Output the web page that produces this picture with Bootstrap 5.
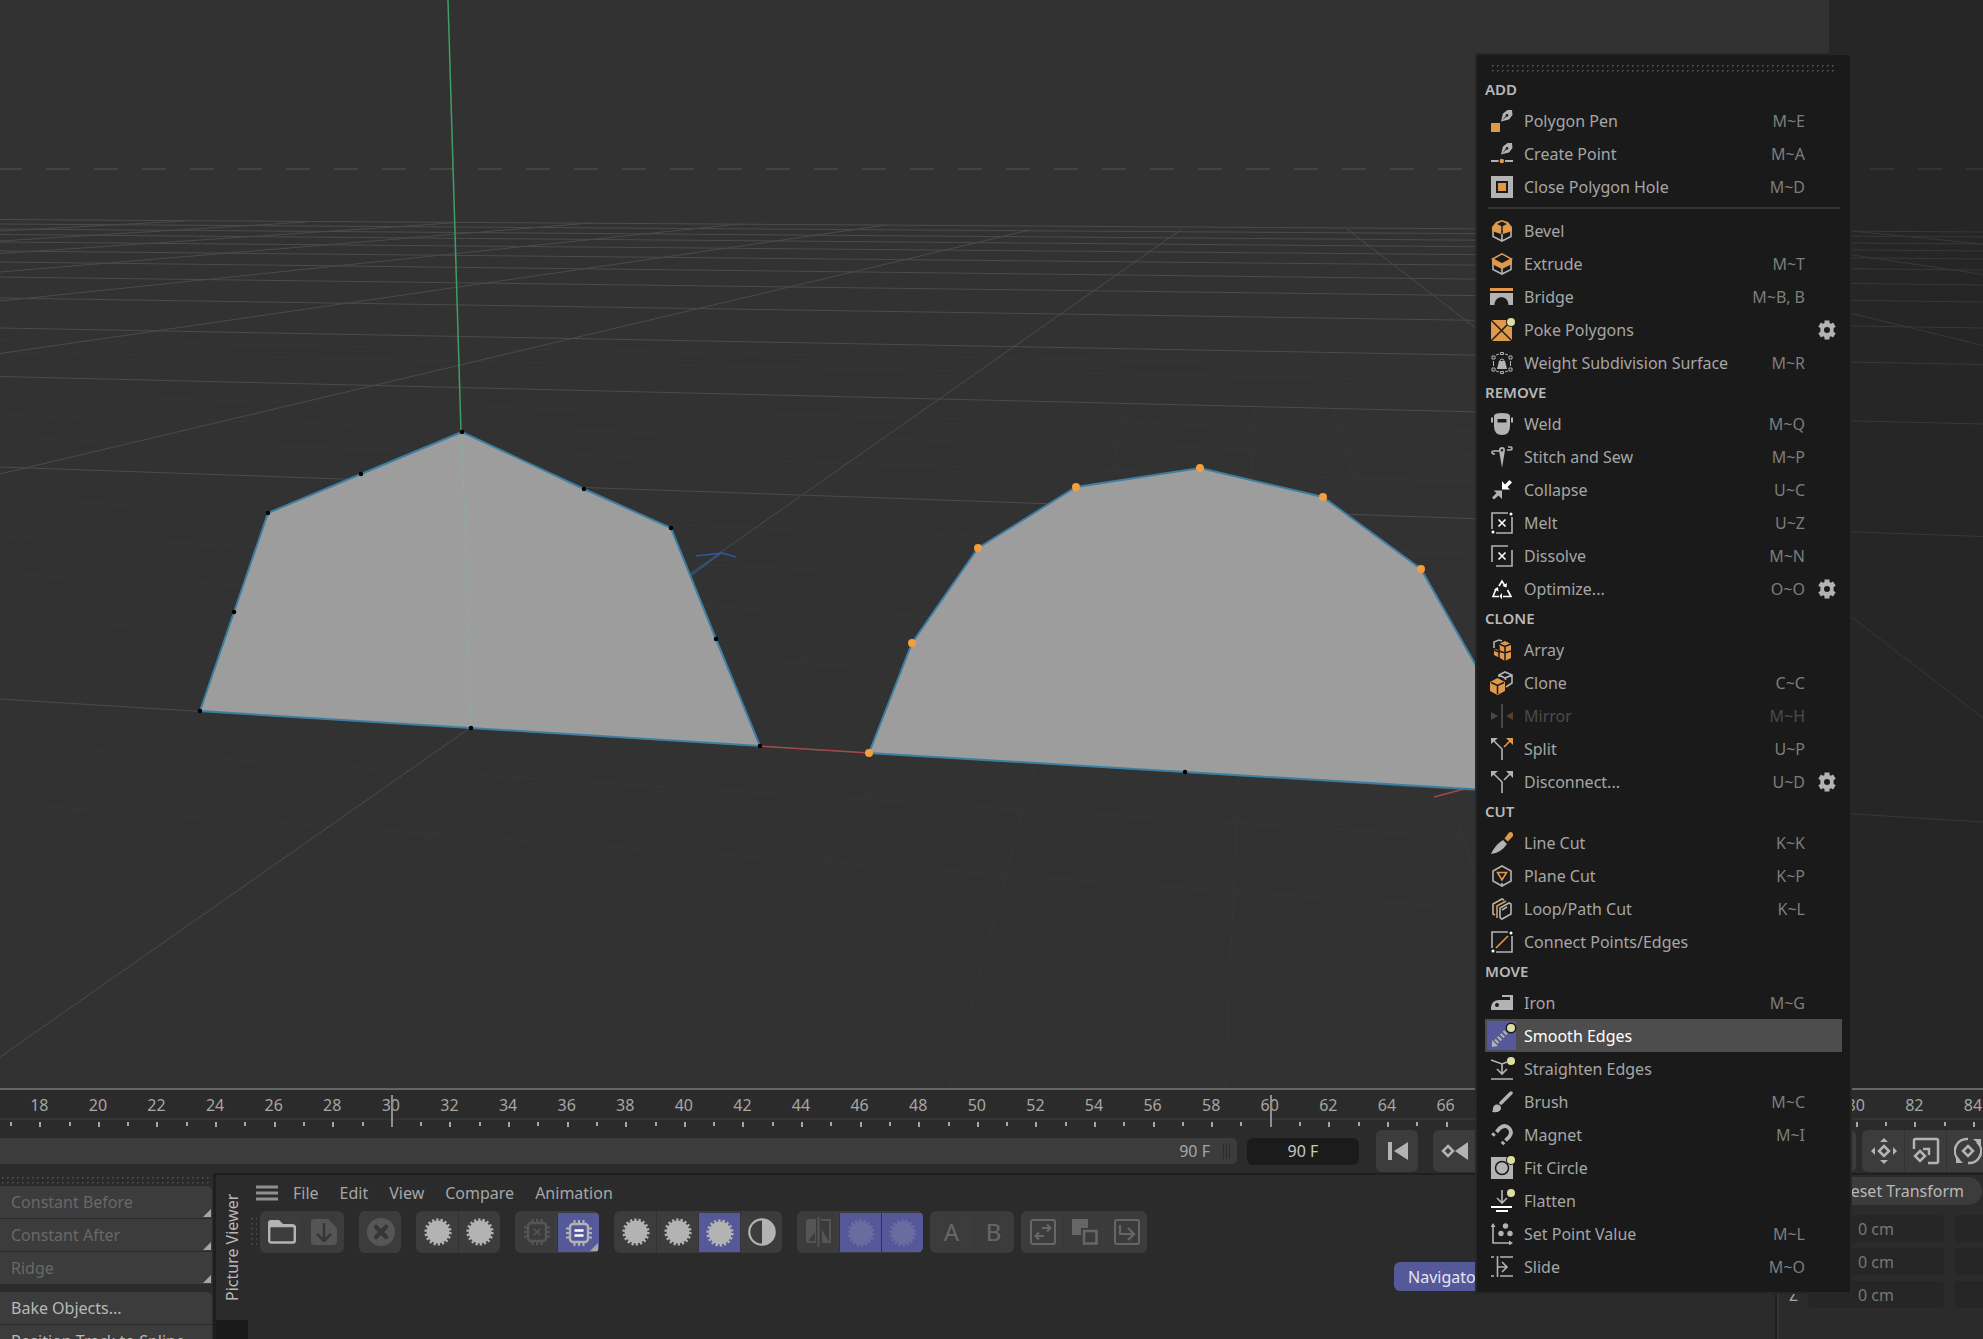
<!DOCTYPE html>
<html lang="en">
<head>
<meta charset="utf-8">
<meta name="viewport" content="width=device-width, initial-scale=1">
<title>Picture Viewer</title>
<link rel="stylesheet" href="https://cdn.jsdelivr.net/npm/bootstrap@5.3.0/dist/css/bootstrap.min.css">
<style>
:root{--ink:#a6a6a6;--panel:#2b2b2b;--btn:#3c3c3c;--deep:#1a1a1a;--accent:#55599a;--icon:#b3b3b3;--warm:#e0994a}
body{background:var(--panel);color:var(--ink);font:16px/24px "Noto Sans","Open Sans",sans-serif;overflow:hidden}
button{background:none;border:0;padding:0;color:inherit;text-align:left}
svg{display:block}
.g{fill:var(--icon)}.o{fill:var(--warm)}.y{fill:#dcdca4}.w{fill:#fff}
.gs,.os,.ws{fill:none;stroke-width:1.6;stroke:var(--icon)}.os{stroke:var(--warm)}.ws{stroke:#fff}
.ks{fill:none;stroke:var(--deep);stroke-width:1.5}.k{fill:var(--deep)}
.app{height:100vh}
.scene{background:#323232;min-height:0}
.scene svg{width:100%;height:100%}
.gridline{stroke:#4b4b4b;fill:none;stroke-width:1}
.fineline{stroke:#373737;fill:none;stroke-width:1}
.edge{stroke:#3c7fa3;stroke-width:2;fill:#9d9d9d}
/* timeline */
.timeline{border-top:2px solid #666;height:85px}
.ruler{height:40px;padding-left:11px;margin-right:-20px;background:linear-gradient(#343434,#343434) 0 28px/100% 2px no-repeat}
.frame{flex:1 1 0;position:relative;text-align:center;line-height:31px;padding-right:2px}
.frame::before,.frame::after{content:"";position:absolute;top:32px;width:2px;height:4px;background:#a6a6a6;left:-1px}
.frame::after{left:50%;height:5px;margin-left:-1px}
.frame.major::after{top:5px;height:32px;background:#8f8f8f}
.controls{margin-right:-5px;height:42px}
.range{background:var(--btn);height:26px;border-radius:0 5px 5px 0;padding-right:6px;line-height:26px}
.notches{width:8px;height:16px;margin-left:13px;background:repeating-linear-gradient(90deg,#2b2b2b 0 1px,transparent 1px 3px)}
.endframe{width:112px;height:27px;margin-left:10px;border:0;border-radius:6px;background:#1b1b1b;color:#c8c8c8;text-align:center}
.tools{background:var(--btn);border-radius:6px;height:42px;overflow:hidden}
.tool{width:42px;height:42px;display:flex;align-items:center;justify-content:center;position:relative;flex:none;border-left:1px solid #333}
.tool:first-child{border-left-color:transparent}
.tool.active{background:var(--accent);margin:2px 0;height:39px}
.tool:disabled{opacity:.22;color:#fff}
.tool.active:disabled{opacity:1}
.tool.active:disabled svg{opacity:.22}
.corner::after{content:"";position:absolute;right:1px;bottom:1px;border:4px solid;border-color:transparent #a6a6a6 #a6a6a6 transparent}
.jump{margin-left:17px}
.transport{width:423px;margin:0 6px 0 15px}
/* dock */
.dock{height:166px}
.grip{background-image:radial-gradient(circle,#484848 1px,transparent 1px);background-size:5px 5px}
.side{width:213px;padding:2px 1px 0 0}
.side .grip{height:10px;margin-bottom:1px}
.cmd{background:var(--btn);height:32px;width:100%;padding-left:11px;margin-bottom:1px;position:relative;color:#b8b8b8;flex:none}
.cmd:disabled{color:#686868}
.cmd.first{border-top-right-radius:5px}
.tabs{width:35px;border-left:3px solid #1f1f1f;border-top:2px solid #1f1f1f;background:var(--deep)}
.tab{writing-mode:vertical-rl;transform:rotate(180deg);height:145px;width:32px;background:var(--panel);text-align:center;line-height:32px;color:#b8b8b8}
.viewer{border-top:2px solid #1f1f1f;min-width:0}
.menubar{height:36px;padding-left:8px;gap:21px}
.burger{margin-right:-6px}
.toolbar{padding-left:1px;gap:15px}
.toolbar .grip{width:8px;height:32px;margin-right:-12px}
.near{margin-left:-8px}
.navtag{background:var(--accent);color:#e6e6ee;border-radius:6px;height:29px;width:140px;padding-left:14px;margin:9px 241px 0 auto}
.attrs{width:208px;border:solid #1f1f1f;border-width:2px 0 0 2px;box-shadow:inset 2px 0 #333;overflow:hidden}
.pill{background:var(--btn);border-radius:14px;height:28px;padding:0 18px;margin:2px 1px 10px;color:#b8b8b8}
.coord{padding-left:12px;margin-bottom:6px;height:27px}
.coord label{width:19px;flex:none}
.coord input{width:136px;height:27px;flex:none;margin-right:10px;background:#262626;border:0;border-radius:5px;color:#777;text-align:center}
/* popup menu */
.popup{position:absolute;z-index:5;top:53px;right:131px;width:377px;background:var(--deep);border:2px solid #272727;padding:8px 8px 9px}
.popup .grip{height:10px;margin:0 7px 3px 5px}
.section{font-weight:600;font-size:15px;line-height:26px;height:28px;color:#b8b8b8}
.entry{height:33px}
.entry.active{background:#4d4d4d;color:#fff}
.entry.active .glyph{background:var(--accent)}
.glyph{width:29px;height:29px;margin:0 8px 0 2px;display:flex;align-items:center;justify-content:center}
.entry kbd{background:none;color:#7d7d7d;font:inherit;padding:0}
.pick{padding-right:10px}
.pick:disabled,.pick:disabled kbd{color:#4a4a4a}.pick:disabled svg{opacity:.3}
.opts{width:27px;flex:none;padding-left:2px}
.rule{height:2px;background:#373737;margin:4px 2px 5px 3px}
</style>
</head>
<body>
<svg width="0" height="0" class="position-absolute" aria-hidden="true"><defs>
<symbol id="gear" viewBox="0 0 20 20"><path class="g" fill-rule="evenodd" d="M7.500 3V.500h5V3l1.400.8 2.200-1.300 2.600 4.300L16.600 8v4l2.100 1.200-2.600 4.300-2.200-1.300-1.400.8v2.500h-5V17l-1.400-.8-2.200 1.300-2.600-4.300L3.400 12V8L1.300 6.800l2.600-4.300 2.200 1.300zM10 7a3 3 0 1 0 0 6 3 3 0 0 0 0-6z"/></symbol>
<symbol id="burst" viewBox="0 0 28 28"><circle class="g" cx="14" cy="14" r="11.400"/><circle cx="14" cy="14" r="12" fill="none" stroke="#b3b3b3" stroke-width="3.200" stroke-dasharray="2.200 1.989"/></symbol>
<symbol id="nib" viewBox="0 0 22 22"><path class="g" fill-rule="evenodd" d="M10 11.500 12 3.500 16.500 0 21 0 21.500 5 18 9.500zM11 10.500 15.500 6.500A1.300 1.300 0 1 0 14.800 5.800z"/></symbol>
<symbol id="chip" viewBox="0 0 28 28"><path fill="none" stroke="#b3b3b3" stroke-width="2" d="M9.500 1v4M14 1v4M18.500 1v4M9.500 23v4M14 23v4M18.500 23v4M1 9.500h4M1 14h4M1 18.500h4M23 9.500h4M23 14h4M23 18.500h4"/><rect x="5" y="5" width="18" height="18" rx="3" fill="none" stroke="#b3b3b3" stroke-width="2.400"/></symbol>
<symbol id="box" viewBox="0 0 22 22"><path class="gs" d="M2 7v9.500l9 4.500 9-4.500V7M11 12v9"/></symbol>
</defs></svg>

<div class="app d-flex flex-column position-relative">
<main class="scene flex-grow-1">
<svg viewBox="0 0 1983 1088" preserveAspectRatio="xMinYMin slice" role="img" aria-label="Perspective view">
<path class="fineline" d="M0 340 1983 376M0 352 1983 391M0 395 1983 444M0 415 1983 469M0 438 1983 497M0 500 1983 573M0 536 1983 617M0 574 1983 665M0 618 1983 730M0 745 1983 870M0 803 1983 945M270 750 0 835M560 750 60 1088M880 590 330 1088M1010 570 680 1088M1130 400 950 1088M1255 400 1225 1088M1330 400 1540 1088M1852 950 1983 1080M1852 740 1983 865"/>
<path class="gridline" d="M0 219.500 1983 232M0 224 1983 237M0 229 1983 244M0 234.500 1983 251M0 242 1983 259M0 251 1983 270M0 262 1983 285M0 277 1983 302M0 298 1983 328M0 328 1983 364.500M0 376.500 1983 424M0 467 1983 536.500M0 699 1983 822M0 474 1030 230M0 353.500 886 225M0 301 740 224M0 272 590 223M0 253.500 459 222.500M0 241 306 222M0 231 185 221M0 1057 1182 229M1347 229 1983 718M1510 230 1983 345.500M1680 229 1983 274.500M1852 231 1983 244"/>
<path d="M-2 169H1983" stroke="#434343" stroke-width="2" stroke-dasharray="24 24"/>
<path d="M448 0 461 432" stroke="#3f9e64" stroke-width="1.500"/>
<path d="M690 576 721 553M696 556l26-3 14 4" fill="none" stroke="#3157a0" stroke-width="1.500"/>
<path d="M760 746 869 753M1434 797l30-8" stroke="#a04a4a" stroke-width="1.500"/>
<path class="edge" d="M462 432 361 474 268 513 234 612 200 711 471 728 760 746 716 639 671 528 584 489z"/>
<path d="M462 434 471 728" stroke="#86b596" stroke-dasharray="3 2"/>
<path class="edge" d="M869 753 912 643 978 548 1076 487 1200 468 1323 497 1421 569 1490 690 1520 792 1185 772z"/>
<path d="M462 432h0M361 474h0M268 513h0M234 612h0M200 711h0M471 728h0M760 746h0M716 639h0M671 528h0M584 489h0M1185 772h0" stroke="#000" stroke-width="4.500" stroke-linecap="round"/>
<path d="M869 753h0M912 643h0M978 548h0M1076 487h0M1200 468h0M1323 497h0M1421 569h0" stroke="#f49e3c" stroke-width="8" stroke-linecap="round"/>
<rect x="1829" width="154" height="1088" fill="#000" opacity=".24"/>
</svg>
</main>

<section class="timeline flex-shrink-0 overflow-hidden">
<div class="ruler d-flex">
<span class="frame">18</span><span class="frame">20</span><span class="frame">22</span><span class="frame">24</span><span class="frame">26</span><span class="frame">28</span><span class="frame major">30</span><span class="frame">32</span><span class="frame">34</span><span class="frame">36</span><span class="frame">38</span><span class="frame">40</span><span class="frame">42</span><span class="frame">44</span><span class="frame">46</span><span class="frame">48</span><span class="frame">50</span><span class="frame">52</span><span class="frame">54</span><span class="frame">56</span><span class="frame">58</span><span class="frame major">60</span><span class="frame">62</span><span class="frame">64</span><span class="frame">66</span><span class="frame">68</span><span class="frame">70</span><span class="frame">72</span><span class="frame">74</span><span class="frame">76</span><span class="frame">78</span><span class="frame">80</span><span class="frame">82</span><span class="frame">84</span>
</div>
<div class="controls d-flex align-items-center">
<div class="range flex-grow-1 d-flex justify-content-end align-items-center">90 F<span class="notches"></span></div>
<input class="endframe" value="90 F" aria-label="End frame">
<div class="tools jump"><button class="tool" aria-label="Go to start"><svg width="20" height="18"><path class="g" d="M0 0h4v18H0zM6 9 20 0v18z"/></svg></button></div>
<div class="tools transport d-flex"><button class="tool" aria-label="Previous key"><svg width="28" height="18"><path class="g" d="M14 9 27 0v18z"/><path d="M7 4l5 5-5 5-5-5z" fill="none" stroke="#b3b3b3" stroke-width="2.500"/></svg></button></div>
<div class="tools d-flex">
<button class="tool" aria-label="Record position"><svg width="28" height="28"><path class="g" d="M14 1l4 4h-8zM14 27l4-4h-8zM1 14l4-4v8zM27 14l-4-4v8z"/><path d="M14 9l5 5-5 5-5-5z" fill="none" stroke="#b3b3b3" stroke-width="2.500"/></svg></button>
<button class="tool" aria-label="Record scale"><svg width="28" height="28"><path d="M2 12V3.500Q2 2 3.500 2h21Q26 2 26 3.500v21q0 1.500-1.500 1.500H16M8 14l5 5-5 5-5-5zM11 12h6v6" fill="none" stroke="#b3b3b3" stroke-width="2.500"/></svg></button>
<button class="tool" aria-label="Record rotation"><svg width="28" height="28"><path d="M14 2A12 12 0 0 0 5 23M14 26A12 12 0 0 0 23 5M14 9l5 5-5 5-5-5z" fill="none" stroke="#b3b3b3" stroke-width="2.500"/><path class="g" d="M19 2h8v7zM2 19l7 7H2z"/></svg></button>
</div>
</div>
</section>

<section class="dock d-flex flex-shrink-0 overflow-hidden">
<aside class="side d-flex flex-column flex-shrink-0">
<div class="grip flex-shrink-0"></div>
<button class="cmd first corner" disabled>Constant Before</button>
<button class="cmd corner" disabled>Constant After</button>
<button class="cmd corner mb-2" disabled>Ridge</button>
<button class="cmd first">Bake Objects...</button>
<button class="cmd">Position Track to Spline...</button>
</aside>
<div class="tabs flex-shrink-0"><button class="tab">Picture Viewer</button></div>
<section class="viewer flex-grow-1">
<nav class="menubar d-flex align-items-center">
<button class="burger" aria-label="Menu"><svg width="22" height="16"><path d="M0 2h22M0 8h22M0 14h22" stroke="#909090" stroke-width="3"/></svg></button>
<button>File</button><button>Edit</button><button>View</button><button>Compare</button><button>Animation</button>
</nav>
<div class="toolbar d-flex align-items-center">
<div class="grip"></div>
<div class="tools d-flex">
<button class="tool" aria-label="Open"><svg width="28" height="24"><path class="g" d="M0 3Q0 0 3 0h8l4 4h9q4 0 4 4H0z"/><rect x="1.200" y="6" width="25.600" height="16.500" rx="2" fill="#3c3c3c" stroke="#b3b3b3" stroke-width="2.400"/></svg></button>
<button class="tool" disabled aria-label="Save"><svg width="26" height="26"><path class="g" d="M4 0h13l9 9v13q0 4-4 4H4q-4 0-4-4V4q0-4 4-4z"/><path d="M13 4v17M6 15l7 7 7-7" fill="none" stroke="#222" stroke-width="2.500"/></svg></button>
</div>
<div class="tools"><button class="tool" disabled aria-label="Stop"><svg width="28" height="28"><circle class="g" cx="14" cy="14" r="14"/><path d="M9 9l10 10M19 9 9 19" stroke="#222" stroke-width="4.500" stroke-linecap="round"/></svg></button></div>
<div class="tools d-flex"><button class="tool" aria-label="Image"><svg width="28" height="28"><use href="#burst"/></svg></button><button class="tool" aria-label="Layer"><svg width="28" height="28"><use href="#burst"/></svg></button></div>
<div class="tools d-flex">
<button class="tool" disabled aria-label="Clear cache"><svg width="28" height="28"><use href="#chip"/><path class="gs" stroke-width="2.500" d="M10.500 10.500l7 7M17.500 10.500l-7 7"/></svg></button>
<button class="tool active corner" aria-label="Cache"><svg width="28" height="28"><use href="#chip"/><path stroke="#fff" stroke-width="2.400" d="M9.500 11.500h9M9.500 16.500h9"/></svg></button>
</div>
<div class="tools d-flex">
<button class="tool" aria-label="Red"><svg width="28" height="28"><use href="#burst"/></svg></button><button class="tool" aria-label="Green"><svg width="28" height="28"><use href="#burst"/></svg></button><button class="tool active" aria-label="Blue"><svg width="28" height="28"><use href="#burst"/></svg></button>
<button class="tool" aria-label="Contrast"><svg width="28" height="28"><circle cx="14" cy="14" r="12.700" fill="none" stroke="#b3b3b3" stroke-width="2.200"/><path class="g" d="M14 1v26a13 13 0 0 0 0-26z"/></svg></button>
</div>
<div class="tools d-flex">
<button class="tool" disabled aria-label="Compare images"><svg width="26" height="30"><path class="g" fill-rule="evenodd" d="M3 2h7v24H2Q0 26 0 24V5Q0 2 3 2zM9 15l-7 9h7zM16 13l8 13h-8z"/><path d="M12.500 0v30M15 3h9v23" fill="none" stroke="#b3b3b3" stroke-width="2"/></svg></button>
<button class="tool active" disabled aria-label="Image A"><svg width="28" height="28"><use href="#burst"/></svg></button><button class="tool active" disabled aria-label="Image B"><svg width="28" height="28"><use href="#burst"/></svg></button>
</div>
<div class="tools near d-flex fs-4"><button class="tool" disabled>A</button><button class="tool" disabled>B</button></div>
<div class="tools near d-flex">
<button class="tool" disabled aria-label="Swap"><svg width="26" height="26"><rect x="1" y="1" width="24" height="24" rx="2" fill="none" stroke="#fff" stroke-width="2"/><path fill="none" stroke="#fff" stroke-width="2" d="M12 9h8M17 5.500 20.500 9 17 12.500M14 17H6M9 13.500 5.500 17 9 20.500"/></svg></button>
<button class="tool" disabled aria-label="Difference"><svg width="26" height="26"><path fill="#fff" d="M0 0h16v9H9v7H0z"/><path fill="none" stroke="#fff" stroke-width="2.500" d="M12 12h12.500v12.500H12z"/></svg></button>
<button class="tool" disabled aria-label="Export"><svg width="26" height="26"><rect x="1" y="1" width="24" height="24" rx="2" fill="none" stroke="#fff" stroke-width="2"/><path fill="none" stroke="#fff" stroke-width="2.200" d="M6 6v9h13M14 9l6 6-6 6"/></svg></button>
</div>
</div>
<button class="navtag d-block">Navigator</button>
</section>
<aside class="attrs flex-shrink-0">
<div class="d-flex justify-content-end"><button class="pill">Reset Transform</button></div>
<div class="coord d-flex align-items-center"><label for="cx">X</label><input id="cx" value="0 cm"><input value="0 cm" aria-label="X rotation"></div>
<div class="coord d-flex align-items-center"><label for="cy">Y</label><input id="cy" value="0 cm"><input value="0 cm" aria-label="Y rotation"></div>
<div class="coord d-flex align-items-center"><label for="cz">Z</label><input id="cz" value="0 cm"><input value="0 cm" aria-label="Z rotation"></div>
</aside>
</section>

<div class="popup" role="menu">
<div class="grip"></div>
<div class="section">ADD</div>
<div class="entry d-flex align-items-center"><button class="pick flex-grow-1 d-flex align-items-center"><span class="glyph"><svg width="22" height="22"><use href="#nib"/><path class="o" d="M0 13h9v9H0z"/></svg></span>Polygon Pen<kbd class="ms-auto">M~E</kbd></button><span class="opts"></span></div>
<div class="entry d-flex align-items-center"><button class="pick flex-grow-1 d-flex align-items-center"><span class="glyph"><svg width="22" height="22"><use href="#nib"/><path class="g" d="M0 17h7.500v2H0zM14 17h8v2h-8z"/><circle class="o" cx="10.800" cy="18" r="2.200"/></svg></span>Create Point<kbd class="ms-auto">M~A</kbd></button><span class="opts"></span></div>
<div class="entry d-flex align-items-center"><button class="pick flex-grow-1 d-flex align-items-center"><span class="glyph"><svg width="22" height="22"><path class="g" d="M0 0h22v22H0z"/><path class="k" d="M5 5h12v12H5z"/><path class="o" d="M7 7h8v8H7z"/></svg></span>Close Polygon Hole<kbd class="ms-auto">M~D</kbd></button><span class="opts"></span></div>
<div class="rule"></div>
<div class="entry d-flex align-items-center"><button class="pick flex-grow-1 d-flex align-items-center"><span class="glyph"><svg width="22" height="22"><use href="#box"/><path class="o" d="M1 7 5 2l6-2 6 2 4 5v4l-9 3v-2l-1-1-1 1v2l-9-3z"/><path class="k" d="M6 4l5-2.500L16 4l-5 2.500zM10.300 6h1.400v8h-1.400z"/></svg></span>Bevel</button><span class="opts"></span></div>
<div class="entry d-flex align-items-center"><button class="pick flex-grow-1 d-flex align-items-center"><span class="glyph"><svg width="22" height="22"><use href="#box"/><path class="o" d="M1 6l10 5 10-5v5l-10 5-10-5z"/><path class="os" d="M1.500 6 11 .900 20.500 6 11 11z"/></svg></span>Extrude<kbd class="ms-auto">M~T</kbd></button><span class="opts"></span></div>
<div class="entry d-flex align-items-center"><button class="pick flex-grow-1 d-flex align-items-center"><span class="glyph"><svg width="23" height="18"><path class="o" d="M0 0h23v3H0z"/><path class="g" d="M0 5h23v12h-4.500C18.500 6.500 4.500 6.500 4.500 17H0z"/></svg></span>Bridge<kbd class="ms-auto">M~B, B</kbd></button><span class="opts"></span></div>
<div class="entry d-flex align-items-center"><button class="pick flex-grow-1 d-flex align-items-center"><span class="glyph"><svg width="22" height="22" overflow="visible"><path class="o" d="M0 1h21v21H0z"/><path class="ks" d="M0 1l21 21M0 22 21 1"/><circle class="k" cx="20" cy="3" r="5"/><circle class="y" cx="20" cy="3" r="4"/></svg></span>Poke Polygons</button><button class="opts" aria-label="Poke options"><svg width="20" height="20"><use href="#gear"/></svg></button></div>
<div class="entry d-flex align-items-center"><button class="pick flex-grow-1 d-flex align-items-center"><span class="glyph"><svg width="22" height="22"><path fill="none" stroke="#b3b3b3" d="M1 4h3v3H1zM9.500 .500h3v2h-3zM18 4h3v3h-3zM1 16h3v3H1zM18 16h3v3h-3zM9.500 19.500h3v2h-3zM2.500 9v5M19.500 9v5M5 3l3-1M14 2l3 1M5 19l3 1M14 20l3-1M9 9a2 2 0 1 1 4 0"/><path class="g" d="M8 9h6l2 8H6z"/></svg></span>Weight Subdivision Surface<kbd class="ms-auto">M~R</kbd></button><span class="opts"></span></div>
<div class="section">REMOVE</div>
<div class="entry d-flex align-items-center"><button class="pick flex-grow-1 d-flex align-items-center"><span class="glyph"><svg width="22" height="22"><path class="g" d="M3 3Q3 0 11 0t8 3v10q0 9-8 9t-8-9zM0 4.500h2v5H0zM20 4.500h2v5h-2z"/><path class="k" d="M6.500 6h9v3.500h-9z"/></svg></span>Weld<kbd class="ms-auto">M~Q</kbd></button><span class="opts"></span></div>
<div class="entry d-flex align-items-center"><button class="pick flex-grow-1 d-flex align-items-center"><span class="glyph"><svg width="22" height="22"><path class="g" fill-rule="evenodd" d="M8 4q0-3 3-3t3 3l-3 18zM11 3a1.300 1.300 0 1 0 0 2.600A1.300 1.300 0 0 0 11 3z"/><path class="gs" d="M4 8Q1 8 1 6.500T3 5h6M16 4h3q2 0 2-1.700T18.500 1H17"/></svg></span>Stitch and Sew<kbd class="ms-auto">M~P</kbd></button><span class="opts"></span></div>
<div class="entry d-flex align-items-center"><button class="pick flex-grow-1 d-flex align-items-center"><span class="glyph"><svg width="22" height="22"><path class="w" d="M11 2v8.500h8L16.500 8l4.500-4.500L18.500 1 14 5.500z"/><path class="g" d="M11 20v-8.500H2.500L5.500 14 1 18.500 3 20.500 7.500 16.500z"/></svg></span>Collapse<kbd class="ms-auto">U~C</kbd></button><span class="opts"></span></div>
<div class="entry d-flex align-items-center"><button class="pick flex-grow-1 d-flex align-items-center"><span class="glyph"><svg width="22" height="22"><path class="gs" d="M1 17V1h16M5 21h16V5"/><path class="ws" stroke-width="2.200" d="M7.500 7.500l7 7M14.500 7.500l-7 7"/><circle class="w" cx="20" cy="2" r="1.500"/><circle class="w" cx="2" cy="20" r="1.500"/></svg></span>Melt<kbd class="ms-auto">U~Z</kbd></button><span class="opts"></span></div>
<div class="entry d-flex align-items-center"><button class="pick flex-grow-1 d-flex align-items-center"><span class="glyph"><svg width="22" height="22"><path class="gs" d="M1 17V1h16M5 21h16V5"/><path class="ws" stroke-width="2.200" d="M7.500 7.500l7 7M14.500 7.500l-7 7"/></svg></span>Dissolve<kbd class="ms-auto">M~N</kbd></button><span class="opts"></span></div>
<div class="entry d-flex align-items-center"><button class="pick flex-grow-1 d-flex align-items-center"><span class="glyph"><svg width="22" height="22"><path class="ws" stroke-width="2" d="M8 8l3-5 3 5M5 11l-3 7.500h6M12 18.500h8L16.500 12"/><path class="w" d="M15.500 9.500 11.500 8 16 5zM3 11.500 7 9l.5 4.500zM11 15v6.500L8.500 18z"/></svg></span>Optimize...<kbd class="ms-auto">O~O</kbd></button><button class="opts" aria-label="Optimize options"><svg width="20" height="20"><use href="#gear"/></svg></button></div>
<div class="section">CLONE</div>
<div class="entry d-flex align-items-center"><button class="pick flex-grow-1 d-flex align-items-center"><span class="glyph"><svg width="22" height="22"><path class="gs" d="M3 9V3l5-2 3 1"/><path class="o" d="M8 5l6-3 6 3v14l-6 3-5-3-6-3V10l5 1z"/><path class="ks" stroke-width="1" d="M8 5l6 2.500L20 5M14 8v14M8 12l6 2 6-2M8 7v12M3 11l5 2"/></svg></span>Array</button><span class="opts"></span></div>
<div class="entry d-flex align-items-center"><button class="pick flex-grow-1 d-flex align-items-center"><span class="glyph"><svg width="24" height="24"><path class="gs" d="M9 6V4l6-3 7 3v8l-6 4M9 4l6 3 7-3M15.500 7v2"/><path class="o" d="M0 11l7.500-4L15 11v9l-7.500 4L0 20z"/><path class="ks" stroke-width="1" d="M1 11.500l6.500 3 6.500-3M7.500 15v8"/></svg></span>Clone<kbd class="ms-auto">C~C</kbd></button><span class="opts"></span></div>
<div class="entry d-flex align-items-center"><button class="pick flex-grow-1 d-flex align-items-center" disabled><span class="glyph"><svg width="22" height="24"><path class="g" d="M0 8l7 4-7 4zM10 0h2v24h-2z"/><path class="o" d="M22 8l-7 4 7 4z"/></svg></span>Mirror<kbd class="ms-auto">M~H</kbd></button><span class="opts"></span></div>
<div class="entry d-flex align-items-center"><button class="pick flex-grow-1 d-flex align-items-center"><span class="glyph"><svg width="22" height="22"><path class="gs" stroke-width="2" d="M11 22V11L3 3"/><path class="g" d="M0 0h7L0 6z"/><path class="os" stroke-width="2" d="M13 9l6-6"/><path class="o" d="M15 0h7v7z"/></svg></span>Split<kbd class="ms-auto">U~P</kbd></button><span class="opts"></span></div>
<div class="entry d-flex align-items-center"><button class="pick flex-grow-1 d-flex align-items-center"><span class="glyph"><svg width="22" height="22"><path class="gs" stroke-width="2" d="M11 22V11L3 3M13 9l6-6"/><path class="g" d="M0 0h7L0 6zM15 0h7v7z"/></svg></span>Disconnect...<kbd class="ms-auto">U~D</kbd></button><button class="opts" aria-label="Disconnect options"><svg width="20" height="20"><use href="#gear"/></svg></button></div>
<div class="section">CUT</div>
<div class="entry d-flex align-items-center"><button class="pick flex-grow-1 d-flex align-items-center"><span class="glyph"><svg width="22" height="22"><path class="g" d="M0 22q4-9 12-14l4 4Q10 21 0 22z"/><path class="o" d="M13.500 6.500 18 .500q2-1 3.500.5T22 4l-5 5.500z"/></svg></span>Line Cut<kbd class="ms-auto">K~K</kbd></button><span class="opts"></span></div>
<div class="entry d-flex align-items-center"><button class="pick flex-grow-1 d-flex align-items-center"><span class="glyph"><svg width="22" height="22"><path class="gs" d="M11 1l9 5v10l-9 5-9-5V6zM11 18v3"/><path class="os" d="M6.500 7.500h9L11 15z"/></svg></span>Plane Cut<kbd class="ms-auto">K~P</kbd></button><span class="opts"></span></div>
<div class="entry d-flex align-items-center"><button class="pick flex-grow-1 d-flex align-items-center"><span class="glyph"><svg width="22" height="22"><path class="gs" stroke-width="1.300" d="M4 17l-2-1V6l9-5 2 1M9 20V10l9-5 2 1v10l-9 5-2-1M11 12l5-3"/><path class="os" stroke-width="2" d="M6 20V8l9-5"/></svg></span>Loop/Path Cut<kbd class="ms-auto">K~L</kbd></button><span class="opts"></span></div>
<div class="entry d-flex align-items-center"><button class="pick flex-grow-1 d-flex align-items-center"><span class="glyph"><svg width="22" height="22"><path class="gs" d="M1 17V1h16M5 21h16V5"/><path class="os" d="M5 17 17 5"/><circle class="w" cx="20" cy="2" r="1.500"/><circle class="w" cx="2" cy="20" r="1.500"/></svg></span>Connect Points/Edges</button><span class="opts"></span></div>
<div class="section">MOVE</div>
<div class="entry d-flex align-items-center"><button class="pick flex-grow-1 d-flex align-items-center"><span class="glyph"><svg width="22" height="16"><path class="g" fill-rule="evenodd" d="M0 15v-3Q1 5 8 5h11V2h-8V0h11v15zM6 8a2 2 0 1 0 0 4 2 2 0 0 0 0-4z"/></svg></span>Iron<kbd class="ms-auto">M~G</kbd></button><span class="opts"></span></div>
<div class="entry active d-flex align-items-center"><button class="pick flex-grow-1 d-flex align-items-center"><span class="glyph"><svg width="22" height="22" overflow="visible"><path stroke="#b3b3b3" stroke-width="5" stroke-dasharray="2 2" d="M5 17 17 5"/><path class="g" d="M1 15l6 6-6 1z"/><circle class="k" cx="20" cy="3" r="5.500"/><circle class="y" cx="20" cy="3" r="4"/></svg></span>Smooth Edges</button><span class="opts"></span></div>
<div class="entry d-flex align-items-center"><button class="pick flex-grow-1 d-flex align-items-center"><span class="glyph"><svg width="22" height="22" overflow="visible"><path class="gs" d="M0 2l11 4 5-2M11 6v10M6 11l5 5 5-5M0 21h22"/><circle class="y" cx="20" cy="3" r="4"/></svg></span>Straighten Edges</button><span class="opts"></span></div>
<div class="entry d-flex align-items-center"><button class="pick flex-grow-1 d-flex align-items-center"><span class="glyph"><svg width="22" height="22"><path d="M10 12 20 2" stroke="#b3b3b3" stroke-width="3.500" stroke-linecap="round"/><path class="g" d="M1 21q1-1 1-4 1-4 4.500-3.500T10 17q0 5-9 4z"/></svg></span>Brush<kbd class="ms-auto">M~C</kbd></button><span class="opts"></span></div>
<div class="entry d-flex align-items-center"><button class="pick flex-grow-1 d-flex align-items-center"><span class="glyph"><svg width="22" height="22"><path fill="none" stroke="#b3b3b3" stroke-width="3.800" d="M5.500 8 9 4q5-4 9 0t0 9l-3.500 3.500"/><path stroke="#b3b3b3" stroke-width="3.800" d="M1.500 11.500l2-2M11 20l2-2"/></svg></span>Magnet<kbd class="ms-auto">M~I</kbd></button><span class="opts"></span></div>
<div class="entry d-flex align-items-center"><button class="pick flex-grow-1 d-flex align-items-center"><span class="glyph"><svg width="22" height="22" overflow="visible"><path class="g" d="M0 0h22v22H0z"/><circle class="ks" cx="11" cy="11" r="6.500"/><circle class="k" cx="20" cy="3" r="5"/><circle class="y" cx="20" cy="3" r="4"/></svg></span>Fit Circle</button><span class="opts"></span></div>
<div class="entry d-flex align-items-center"><button class="pick flex-grow-1 d-flex align-items-center"><span class="glyph"><svg width="22" height="22" overflow="visible"><path class="gs" d="M11 0v13M6 8l5 5 5-5"/><path class="w" d="M0 16h21v2H0zM5 20h12v2H5z"/><circle class="y" cx="20" cy="3" r="4"/></svg></span>Flatten</button><span class="opts"></span></div>
<div class="entry d-flex align-items-center"><button class="pick flex-grow-1 d-flex align-items-center"><span class="glyph"><svg width="22" height="22"><path class="gs" d="M2 2v18h18"/><path class="g" d="M2 0l2.500 4h-5zM22 20l-4-2.500v5z"/><circle class="g" cx="14.500" cy="3" r="2.700"/><circle class="g" cx="10" cy="10.500" r="2.700"/><circle class="g" cx="19" cy="10.500" r="2.700"/></svg></span>Set Point Value<kbd class="ms-auto">M~L</kbd></button><span class="opts"></span></div>
<div class="entry d-flex align-items-center"><button class="pick flex-grow-1 d-flex align-items-center"><span class="glyph"><svg width="22" height="22"><path class="gs" d="M0 1h3M0 20h3M9 1h13M9 20h13M6.500 0v21M7 11h9M11 6l5 5-5 5"/></svg></span>Slide<kbd class="ms-auto">M~O</kbd></button><span class="opts"></span></div>
</div>
</div>
<script src="https://cdn.jsdelivr.net/npm/bootstrap@5.3.0/dist/js/bootstrap.bundle.min.js"></script>
</body>
</html>
